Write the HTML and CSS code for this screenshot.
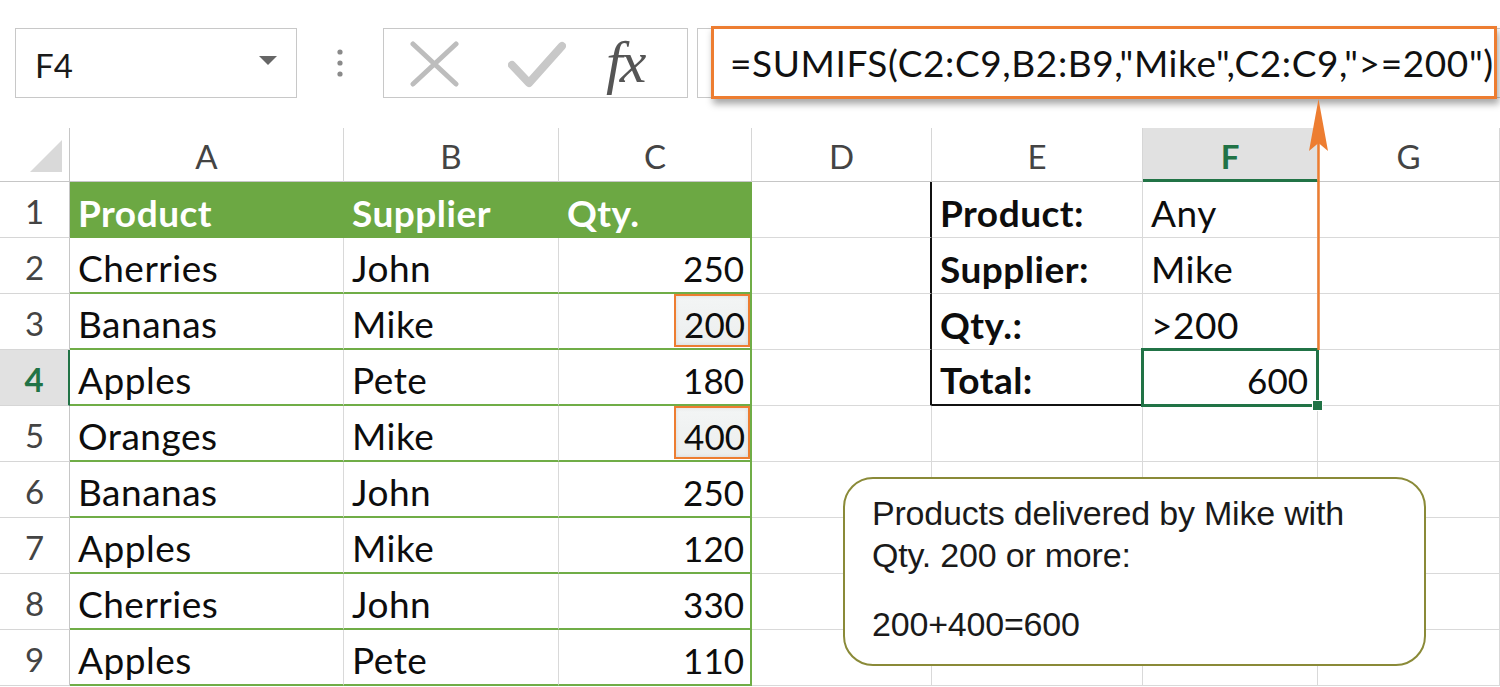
FILE: index.html
```html
<!DOCTYPE html>
<html>
<head>
<meta charset="utf-8">
<link rel="stylesheet" href="styles.css">
</head>
<body>
<div class="page">
  <div class="toolbar">
    <div class="namebox"><span class="nb-text">F4</span><svg class="nb-arrow" width="20" height="10" viewBox="0 0 20 10"><path d="M1 1 L19 1 L10 10 Z" fill="#666"/></svg></div>
    <div class="dots"><svg width="8" height="30" viewBox="0 0 8 30"><circle cx="4" cy="4" r="2.6" fill="#8a8a8a"/><circle cx="4" cy="15" r="2.6" fill="#8a8a8a"/><circle cx="4" cy="26" r="2.6" fill="#8a8a8a"/></svg></div>
    <div class="fnbtns">
      <svg class="ico-x" width="52" height="46" viewBox="0 0 52 46"><path d="M4 3 L47 43 M47 3 L4 43" stroke="#bdbdbd" stroke-width="5" stroke-linecap="round" fill="none"/></svg>
      <svg class="ico-ok" width="58" height="48" viewBox="0 0 58 48"><path d="M4 24 L21 42 L54 5" stroke="#c8c8c8" stroke-width="8" stroke-linecap="round" stroke-linejoin="round" fill="none"/></svg>
      <span class="fx">fx</span>
    </div>
    <div class="fbar"><div class="formula">=SUMIFS(C2:C9,B2:B9,"Mike",C2:C9,"&gt;=200")</div></div>
  </div>

  <div class="sheet">
    <div class="corner"><svg width="70" height="54" viewBox="0 0 70 54"><path d="M30 44 L62 44 L62 12 Z" fill="#d9d9d9"/></svg></div>
    <div class="ch">A</div><div class="ch">B</div><div class="ch">C</div><div class="ch">D</div><div class="ch">E</div><div class="ch sel">F</div><div class="ch">G</div>

    <div class="rh">1</div>
    <div class="c hdr">Product</div><div class="c hdr">Supplier</div><div class="c hdr hdr-end">Qty.</div>
    <div class="c bk-r"></div><div class="c lb">Product:</div><div class="c">Any</div><div class="c"></div>

    <div class="rh">2</div>
    <div class="c tb">Cherries</div><div class="c tb">John</div><div class="c tb tr num">250</div>
    <div class="c bk-r"></div><div class="c lb">Supplier:</div><div class="c">Mike</div><div class="c"></div>

    <div class="rh">3</div>
    <div class="c tb">Bananas</div><div class="c tb">Mike</div><div class="c tb tr num hlc"><span class="hl">200</span></div>
    <div class="c bk-r"></div><div class="c lb">Qty.:</div><div class="c">&gt;200</div><div class="c"></div>

    <div class="rh sel">4</div>
    <div class="c tb">Apples</div><div class="c tb">Pete</div><div class="c tb tr num">180</div>
    <div class="c bk-r"></div><div class="c lb bk-b">Total:</div><div class="c num active">600</div><div class="c"></div>

    <div class="rh">5</div>
    <div class="c tb">Oranges</div><div class="c tb">Mike</div><div class="c tb tr num hlc"><span class="hl">400</span></div>
    <div class="c"></div><div class="c"></div><div class="c"></div><div class="c"></div>

    <div class="rh">6</div>
    <div class="c tb">Bananas</div><div class="c tb">John</div><div class="c tb tr num">250</div>
    <div class="c"></div><div class="c"></div><div class="c"></div><div class="c"></div>

    <div class="rh">7</div>
    <div class="c tb">Apples</div><div class="c tb">Mike</div><div class="c tb tr num">120</div>
    <div class="c"></div><div class="c"></div><div class="c"></div><div class="c"></div>

    <div class="rh">8</div>
    <div class="c tb">Cherries</div><div class="c tb">John</div><div class="c tb tr num">330</div>
    <div class="c"></div><div class="c"></div><div class="c"></div><div class="c"></div>

    <div class="rh">9</div>
    <div class="c tb">Apples</div><div class="c tb">Pete</div><div class="c tb tr num">110</div>
    <div class="c"></div><div class="c"></div><div class="c"></div><div class="c"></div>
  </div>

  <div class="callout">
    <p class="co-line">Products delivered by Mike with<br>Qty. 200 or more:</p>
    <p class="co-line co-sum">200+400=600</p>
  </div>

  <svg class="arrow" width="1500" height="687" viewBox="0 0 1500 687">
    <line x1="1318.5" y1="120" x2="1318.5" y2="350" stroke="#ED7D31" stroke-width="2.5"/>
    <path d="M1318.5 99 L1328 151 L1318.5 143 L1309 151 Z" fill="#ED7D31"/>
  </svg>
</div>
</body>
</html>
```

FILE: styles.css
```css
html, body {
  margin: 0;
  padding: 0;
  background: #ffffff;
}

.page {
  position: relative;
  width: 1500px;
  height: 687px;
  overflow: hidden;
  font-family: Lato, "Open Sans", sans-serif;
  color: #111;
}

/* ---------- toolbar ---------- */
.toolbar {
  display: flex;
  align-items: flex-start;
  height: 128px;
  padding-top: 28px;
  box-sizing: border-box;
}

.namebox {
  margin-left: 15px;
  width: 282px;
  height: 70px;
  box-sizing: border-box;
  border: 1px solid #c8c8c8;
  display: flex;
  align-items: center;
  justify-content: space-between;
  padding: 0 18px 0 19px;
}

.nb-text {
  font-size: 33px;
  color: #1a1a1a;
  line-height: 1;
  padding-top: 4px;
}

.nb-arrow {
  margin-top: -6px;
}

.dots {
  width: 86px;
  height: 70px;
  display: flex;
  align-items: center;
  justify-content: center;
}

.fnbtns {
  width: 305px;
  height: 70px;
  box-sizing: border-box;
  border: 1px solid #c8c8c8;
  display: flex;
  align-items: center;
  padding-left: 25px;
}

.ico-x {
  margin-top: 2px;
}

.ico-ok {
  margin-left: 47px;
  margin-top: 4px;
}

.fx {
  margin-left: 40px;
  font-family: "Liberation Serif", "DejaVu Serif", serif;
  font-style: italic;
  font-size: 60px;
  color: #555;
  line-height: 1;
  margin-top: -2px;
  letter-spacing: -3px;
}

.fbar {
  flex: 1;
  margin-left: 9px;
  height: 70px;
  box-sizing: border-box;
  border: 1px solid #c8c8c8;
  border-right: none;
  padding: 0 3px 0 13px;
  position: relative;
}

.formula {
  margin-top: -3px;
  height: 73px;
  box-sizing: border-box;
  border: 3px solid #ED7D31;
  background: #fff;
  box-shadow: 2px 5px 7px rgba(0, 0, 0, 0.35);
  display: flex;
  align-items: center;
  padding-left: 16px;
  font-size: 37px;
  color: #111;
  white-space: nowrap;
  letter-spacing: 0.6px;
}

/* ---------- sheet ---------- */
.sheet {
  display: grid;
  grid-template-columns: 70px 274px 215px 193px 180px 211px 175px 182px;
  grid-template-rows: 54px repeat(9, 56px);
  font-size: 37px;
  letter-spacing: 0.5px;
}

.corner {
  border-right: 1px solid #c6c6c6;
  border-bottom: 1px solid #c6c6c6;
  box-sizing: border-box;
}

.corner svg {
  display: block;
}

.ch {
  box-sizing: border-box;
  border-right: 1px solid #d6d6d6;
  border-bottom: 1px solid #c6c6c6;
  display: flex;
  align-items: center;
  justify-content: center;
  color: #444;
  font-size: 33px;
  padding-top: 2px;
  letter-spacing: 0;
}

.ch.sel {
  background: #e1e1e1;
  border-bottom: 3px solid #217346;
  color: #217346;
  font-weight: 700;
  padding-top: 5px;
}

.rh {
  box-sizing: border-box;
  border-right: 1px solid #c6c6c6;
  border-bottom: 1px solid #d6d6d6;
  display: flex;
  align-items: center;
  justify-content: center;
  color: #444;
  font-size: 33px;
  padding-top: 3px;
  letter-spacing: 0;
}

.rh.sel {
  background: #e1e1e1;
  border-right: 2px solid #217346;
  color: #217346;
  font-weight: 700;
}

.c {
  box-sizing: border-box;
  border-right: 1px solid #d9d9d9;
  border-bottom: 1px solid #d9d9d9;
  display: flex;
  align-items: center;
  padding: 5px 8px 0 8px;
  white-space: nowrap;
  color: #0d0d0d;
}

.c.num {
  justify-content: flex-end;
  padding-right: 6px;
  font-size: 35px;
  letter-spacing: 0;
}

.c.hdr {
  background: #6ca843;
  color: #fff;
  font-weight: 700;
  border-right-color: #6ca843;
  border-bottom-color: #6ca843;
}

.c.hdr-end {
  border-right: 2px solid #6ca843;
}

.c.tb {
  border-bottom: 2px solid #70ad47;
}

.c.tr {
  border-right: 2px solid #70ad47;
}

.c.hlc {
  padding-right: 0;
  padding-top: 0;
  padding-bottom: 1px;
  align-items: stretch;
}

.hl {
  display: flex;
  align-items: center;
  padding: 6px 3px 0 8px;
  border: 2px solid #ED7D31;
  background: linear-gradient(#f3f5f5, #eceeee);
  box-shadow: inset 0 0 4px rgba(0, 0, 0, 0.1);
}

.c.lb {
  font-weight: 700;
}

.c.bk-r {
  border-right: 2px solid #111;
}

.c.bk-b {
  border-bottom: 2px solid #111;
}

.c.active {
  position: relative;
  padding-right: 9px;
}

.c.active::after {
  content: "";
  position: absolute;
  left: -2px;
  top: -2px;
  right: -2px;
  bottom: -2px;
  border: 3px solid #217346;
}

.c.active::before {
  content: "";
  position: absolute;
  right: -6px;
  bottom: -6px;
  width: 9px;
  height: 9px;
  background: #217346;
  border: 1px solid #fff;
  z-index: 2;
}

/* ---------- callout ---------- */
.callout {
  position: absolute;
  left: 843px;
  top: 477px;
  width: 583px;
  height: 189px;
  box-sizing: border-box;
  border: 2px solid #8a8a38;
  border-radius: 30px;
  background: #fff;
  padding: 13px 0 0 27px;
  font-family: "Liberation Sans", Arial, sans-serif;
  font-size: 34px;
  color: #1a1a1a;
}

.co-line {
  margin: 0;
  line-height: 42px;
  letter-spacing: -0.2px;
}

.co-sum {
  margin-top: 27px;
}

.arrow {
  position: absolute;
  left: 0;
  top: 0;
  pointer-events: none;
}
```
